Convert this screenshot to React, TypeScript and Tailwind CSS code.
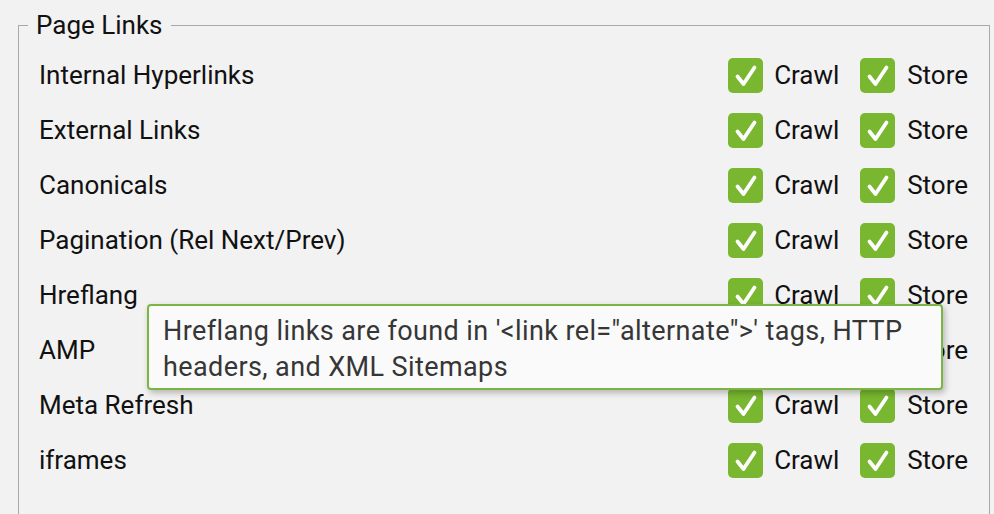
import React from "react";

const rows = [
  "Internal Hyperlinks",
  "External Links",
  "Canonicals",
  "Pagination (Rel Next/Prev)",
  "Hreflang",
  "AMP",
  "Meta Refresh",
  "iframes",
];

function Check() {
  return (
    <span className="flex h-[35px] w-[35px] shrink-0 items-center justify-center rounded-[5px] bg-[#78b72f]">
      <svg width="24" height="24" viewBox="0 0 24 24">
        <path d="M3.5 12.5 L9.5 20 L20.5 3.5" fill="none" stroke="white" strokeWidth="3.8" strokeLinecap="round" strokeLinejoin="round" />
      </svg>
    </span>
  );
}

export default function App() {
  return (
    <div className="relative h-[514px] w-[994px] overflow-hidden bg-[#f2f2f2] text-[26px] text-[#111]" style={{ fontFamily: "Roboto, 'Noto Sans', sans-serif" }}>
      <fieldset className="ml-[18px] mr-[4px] mt-[10px] h-[540px] border border-[#a8a8a8] pl-[20px] pr-[21px] pt-[8px]">
        <legend className="ml-[-11px] px-[8px] leading-[30px]">Page Links</legend>
        {rows.map((r) => (
          <div key={r} className="flex h-[55px] items-center justify-between">
            <span>{r}</span>
            <div className="flex items-center">
              <div className="flex w-[132px] items-center gap-[11px]">
                <Check />
                <span>Crawl</span>
              </div>
              <div className="flex items-center gap-[12px]">
                <Check />
                <span>Store</span>
              </div>
            </div>
          </div>
        ))}
      </fieldset>
      <div className="absolute left-[147px] top-[304px] h-[86px] w-[796px] rounded-[4px] border-2 border-[#7bb543] bg-[#fafafa] pl-[14px] pt-[7px] text-[27px] leading-[36px] tracking-[0.4px] text-[#363636] shadow-[2px_3px_6px_rgba(0,0,0,0.25)]">
        Hreflang links are found in '&lt;link rel="alternate"&gt;' tags, HTTP
        <br />
        headers, and XML Sitemaps
      </div>
    </div>
  );
}
